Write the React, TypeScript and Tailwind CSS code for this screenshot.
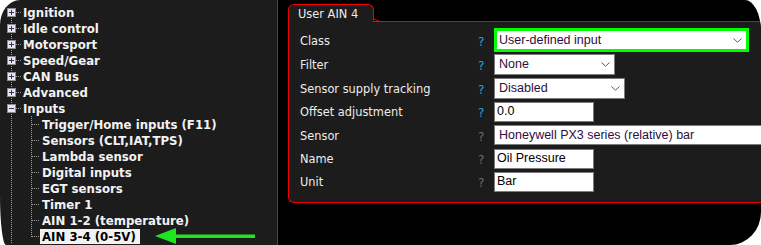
import type { ReactNode } from 'react'

const topItems = ['Ignition', 'Idle control', 'Motorsport', 'Speed/Gear', 'CAN Bus', 'Advanced']

const inputItems = [
  'Trigger/Home inputs (F11)',
  'Sensors (CLT,IAT,TPS)',
  'Lambda sensor',
  'Digital inputs',
  'EGT sensors',
  'Timer 1',
  'AIN 1-2 (temperature)',
  'AIN 3-4 (0-5V)',
]

const DOT = '#9c9c9c'

function ExpandBox({ expanded }: { expanded?: boolean }) {
  return (
    <>
      <rect x="7.5" y="4.5" width="8" height="8" fill="#e6e6e6" stroke="#8c8c8c" />
      <line x1="9" y1="8.5" x2="14" y2="8.5" stroke="#24378c" />
      {!expanded && <line x1="11.5" y1="6" x2="11.5" y2="11" stroke="#24378c" />}
    </>
  )
}

function TopRow({ label, first, expanded }: { label: string; first?: boolean; expanded?: boolean }) {
  return (
    <div className="flex h-[16px] items-center">
      <svg width="23" height="16" className="shrink-0" shapeRendering="crispEdges">
        <line x1="11.5" y1={first ? 12 : 0} x2="11.5" y2="16" stroke={DOT} strokeDasharray="1 1" />
        <line x1="16" y1="8.5" x2="22" y2="8.5" stroke={DOT} strokeDasharray="1 1" />
        <ExpandBox expanded={expanded} />
      </svg>
      <span className="whitespace-nowrap pt-px leading-[16px]">{label}</span>
    </div>
  )
}

function ChildRow({ label, last, selected }: { label: string; last?: boolean; selected?: boolean }) {
  return (
    <div className="flex h-[16px] items-center">
      <svg width="40" height="16" className="shrink-0" shapeRendering="crispEdges">
        <line x1="11.5" y1="0" x2="11.5" y2="16" stroke={DOT} strokeDasharray="1 1" />
        <line x1="31.5" y1="0" x2="31.5" y2={last ? 9 : 16} stroke={DOT} strokeDasharray="1 1" />
        <line x1="32" y1="8.5" x2="40" y2="8.5" stroke={DOT} strokeDasharray="1 1" />
      </svg>
      {selected ? (
        <>
          <span className="h-[15px] w-[100px] whitespace-nowrap bg-[#f2f2f2] pl-[2px] pt-px leading-[15px] text-black">
            {label}
          </span>
          <svg width="100" height="17" className="ml-[15px] shrink-0">
            <polygon points="0,8 21,0 21,16" fill="#1ee61e" />
            <rect x="20" y="6.5" width="80" height="3.5" fill="#1ee61e" />
          </svg>
        </>
      ) : (
        <span className="whitespace-nowrap pl-[2px] pt-px leading-[16px]">{label}</span>
      )}
    </div>
  )
}

function Chevron() {
  return (
    <svg width="9" height="5" viewBox="0 0 9 5" className="shrink-0">
      <polyline points="0.5,0.5 4.5,4.2 8.5,0.5" fill="none" stroke="#5a5a5a" strokeWidth="1" />
    </svg>
  )
}

function Select({ value, w, h, green }: { value: string; w: string; h: string; green?: boolean }) {
  return (
    <div
      className={`flex items-center justify-between bg-white text-[#300c40] ${w} ${h} ${
        green ? 'border-[3px] border-[#00ff00] pl-[2px] pr-[4px]' : 'border border-[#7c7c7c] pl-[4px] pr-[4px]'
      }`}
    >
      <span className="whitespace-nowrap">{value}</span>
      <Chevron />
    </div>
  )
}

function TextBox({ value }: { value: string }) {
  return (
    <div className="flex h-[20px] w-[100px] items-center border border-[#7c7c7c] bg-white pl-[2px] text-black">
      <span className="whitespace-nowrap">{value}</span>
    </div>
  )
}

const rows: { label: string; blue: boolean; h: string; field: ReactNode }[] = [
  { label: 'Class', blue: true, h: 'h-[24px]', field: <Select value="User-defined input" w="w-[255px]" h="h-[24px]" green /> },
  { label: 'Filter', blue: true, h: 'h-[24px]', field: <Select value="None" w="w-[121px]" h="h-[21px]" /> },
  { label: 'Sensor supply tracking', blue: true, h: 'h-[24px]', field: <Select value="Disabled" w="w-[131px]" h="h-[21px]" /> },
  { label: 'Offset adjustment', blue: true, h: 'h-[23px]', field: <TextBox value="0.0" /> },
  {
    label: 'Sensor',
    blue: false,
    h: 'h-[24px]',
    field: <Select value="Honeywell PX3 series (relative) bar" w="w-[330px]" h="h-[20px]" />,
  },
  { label: 'Name', blue: false, h: 'h-[23px]', field: <TextBox value="Oil Pressure" /> },
  { label: 'Unit', blue: false, h: 'h-[23px]', field: <TextBox value="Bar" /> },
]

export default function App() {
  return (
    <div className="h-[245px] w-[761px] bg-white">
      <div className="flex h-full overflow-hidden rounded-tl-[20px_25px] rounded-tr-[16px_32px] rounded-br-[31px_33px] rounded-bl-[6px_50px]">
        {/* tree */}
        <div className="w-[278px] shrink-0 border-r border-[#f00000] bg-[#1c1c1c] pt-[4px] font-['DejaVu_Sans',sans-serif] text-[11.75px] font-bold text-[#f2f2f2]">
          {topItems.map((t, i) => (
            <TopRow key={t} label={t} first={i === 0} />
          ))}
          <TopRow label="Inputs" expanded />
          {inputItems.map((t, i) => (
            <ChildRow key={t} label={t} last={i === inputItems.length - 1} selected={i === inputItems.length - 1} />
          ))}
        </div>

        {/* settings */}
        <div className="flex-1 bg-black pl-[10px] pt-[4px] font-['DejaVu_Sans',sans-serif] text-[11.4px] text-[#ececec]">
          <div className="flex w-[600px] flex-col">
            <div className="relative z-10 -mb-px h-[18px] w-[86px] rounded-t-[6px] border border-b-0 border-[#f00000] bg-[#1c1c1c] pl-[9px] pt-px leading-[16px]">
              User AIN 4
              <svg width="6" height="6" className="absolute -right-[6px] bottom-[1px]">
                <path d="M0 0 Q0 5.5 6 5.5" fill="none" stroke="#f00000" />
              </svg>
            </div>
            <div className="rounded-bl-[6px] border-b border-l border-t border-[#f00000] bg-[#1c1c1c] pb-[9px] pl-[11px] pt-[6px]">
              {rows.map(r => (
                <div key={r.label} className={`flex items-center ${r.h}`}>
                  <span className="w-[178px] shrink-0 whitespace-nowrap pt-[3px]">{r.label}</span>
                  <span className={`w-[16px] shrink-0 pt-[3px] text-[12px] ${r.blue ? 'text-[#22a3dc]' : 'text-[#6c6c6c]'}`}>
                    ?
                  </span>
                  <div className="font-['Liberation_Sans',Arial,sans-serif] text-[12.5px]">{r.field}</div>
                </div>
              ))}
            </div>
          </div>
        </div>
      </div>
    </div>
  )
}
